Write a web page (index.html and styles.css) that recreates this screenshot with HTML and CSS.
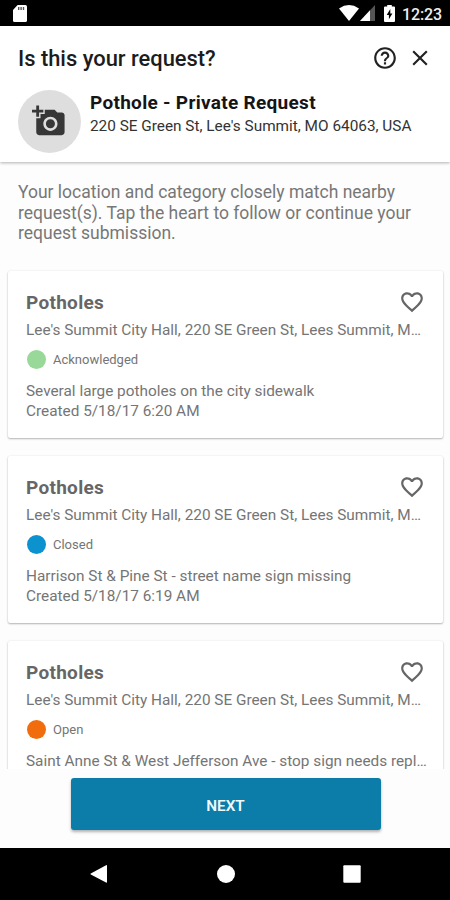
FILE: index.html
```html
<!DOCTYPE html>
<html lang="en">
<head>
<meta charset="utf-8">
<title>Is this your request?</title>
<link rel="stylesheet" href="styles.css">
</head>
<body>
<svg class="defs" width="0" height="0" aria-hidden="true">
  <symbol id="heart" viewBox="0 0 24 24"><path d="M16.5 3c-1.74 0-3.41.81-4.5 2.09C10.91 3.81 9.24 3 7.5 3 4.42 3 2 5.42 2 8.5c0 3.78 3.4 6.86 8.55 11.54L12 21.35l1.45-1.32C18.6 15.36 22 12.28 22 8.5 22 5.42 19.58 3 16.5 3zm-4.4 15.55l-.1.1-.1-.1C7.14 14.24 4 11.39 4 8.5 4 6.5 5.5 5 7.5 5c1.54 0 3.04.99 3.57 2.36h1.87C13.46 5.99 14.96 5 16.5 5c2 0 3.5 1.5 3.5 3.5 0 2.89-3.14 5.74-7.9 10.05z"/></symbol>
</svg>
<div class="screen">
  <div class="status-bar">
    <svg class="sd" viewBox="0 0 14 17"><path fill="#fff" d="M4.6 0H12.4Q14 0 14 1.6V15.4Q14 17 12.4 17H1.6Q0 17 0 15.4V5z"/><path fill="#555" d="M5 2h1.4v3H5zM7.4 2h1.4v3H7.4zM9.8 2h1.4v3H9.8z"/></svg>
    <div class="status-icons">
      <svg class="wifi" viewBox="0 0 20 16"><path fill="#fff" d="M0 3.4Q10-3.2 20 3.4L10 16z"/></svg>
      <svg class="signal" viewBox="0 0 15 16"><path fill="#555" d="M15 0V16H0z"/><path fill="#fff" d="M10 5.3V16H0z"/></svg>
      <svg class="battery" viewBox="0 0 11 17"><path fill="#fff" d="M3.2 0h4.6v1.6H10q1 0 1 1V16q0 1-1 1H1q-1 0-1-1V2.600q0-1 1-1h2.200z"/><path fill="#000" d="M6.300 4L2.700 10h2.200v4.200L8.400 8.400H6.300z"/></svg>
      <span class="clock">12:23</span>
    </div>
  </div>
  <header class="header">
    <div class="title-row">
      <h1 class="title">Is this your request?</h1>
      <svg class="icon" viewBox="0 0 24 24"><path d="M11 18h2v-2h-2v2zm1-16C6.480 2 2 6.480 2 12s4.480 10 10 10 10-4.480 10-10S17.520 2 12 2zm0 18c-4.410 0-8-3.590-8-8s3.590-8 8-8 8 3.590 8 8-3.590 8-8 8zm0-14c-2.210 0-4 1.790-4 4h2c0-1.100.9-2 2-2s2 .9 2 2c0 2-3 1.750-3 5h2c0-2.250 3-2.500 3-5 0-2.210-1.790-4-4-4z"/></svg>
      <svg class="icon close" viewBox="0 0 24 24"><path d="M19 6.410L17.590 5 12 10.590 6.410 5 5 6.410 10.590 12 5 17.590 6.410 19 12 13.410 17.590 19 19 17.590 13.410 12z"/></svg>
    </div>
    <div class="request">
      <div class="avatar">
        <svg class="camera" viewBox="0 0 24 24"><path d="M3 4V1h2v3h3v2H5v3H3V6H0V4h3zm3 6V7h3V4h7l1.830 2H21c1.100 0 2 .9 2 2v12c0 1.100-.9 2-2 2H5c-1.100 0-2-.9-2-2V10h3zm7 9c2.760 0 5-2.240 5-5s-2.240-5-5-5-5 2.240-5 5 2.240 5 5 5zm-3.200-5c0 1.770 1.430 3.200 3.200 3.200s3.200-1.430 3.200-3.200-1.430-3.200-3.200-3.200-3.200 1.430-3.200 3.200z"/></svg>
      </div>
      <div class="request-text">
        <div class="request-name">Pothole - Private Request</div>
        <div class="request-address">220 SE Green St, Lee's Summit, MO 64063, USA</div>
      </div>
    </div>
  </header>
  <main class="content">
    <p class="intro">Your location and category closely match nearby<br>request(s). Tap the heart to follow or continue your<br>request submission.</p>
    <article class="card">
      <div class="card-head"><h2 class="card-title">Potholes</h2><svg class="heart"><use href="#heart"/></svg></div>
      <div class="line address">Lee's Summit City Hall, 220 SE Green St, Lees Summit, M…</div>
      <div class="state"><span class="dot acknowledged"></span><span class="state-name">Acknowledged</span></div>
      <div class="line">Several large potholes on the city sidewalk</div>
      <div class="line">Created 5/18/17 6:20 AM</div>
    </article>
    <article class="card">
      <div class="card-head"><h2 class="card-title">Potholes</h2><svg class="heart"><use href="#heart"/></svg></div>
      <div class="line address">Lee's Summit City Hall, 220 SE Green St, Lees Summit, M…</div>
      <div class="state"><span class="dot closed"></span><span class="state-name">Closed</span></div>
      <div class="line">Harrison St &amp; Pine St - street name sign missing</div>
      <div class="line">Created 5/18/17 6:19 AM</div>
    </article>
    <article class="card">
      <div class="card-head"><h2 class="card-title">Potholes</h2><svg class="heart"><use href="#heart"/></svg></div>
      <div class="line address">Lee's Summit City Hall, 220 SE Green St, Lees Summit, M…</div>
      <div class="state"><span class="dot open"></span><span class="state-name">Open</span></div>
      <div class="line">Saint Anne St &amp; West Jefferson Ave - stop sign needs repl…</div>
    </article>
  </main>
  <footer class="footer"><button class="next">NEXT</button></footer>
  <nav class="nav-bar">
    <svg class="nav-icon" viewBox="0 0 18 18"><path d="M16.500 0Q17 0 17 1V17Q17 18 16 17.600L.8 9.600Q0 9 .8 8.400z"/></svg>
    <svg class="nav-icon" viewBox="0 0 18 18"><circle cx="9" cy="9" r="9"/></svg>
    <svg class="nav-icon" viewBox="0 0 18 18"><rect x=".3" y=".3" width="17.400" height="17.400" rx="1"/></svg>
  </nav>
</div>
</body>
</html>
```
FILE: styles.css
```css
* { box-sizing: border-box; }
body { margin: 0; font-family: Roboto, "Liberation Sans", sans-serif; background: #fff; }
h1, h2, p { margin: 0; }
svg { display: block; flex: none; }
.defs { display: none; }
.screen { width: 450px; height: 900px; display: flex; flex-direction: column; overflow: hidden; background: #fdfdfd; }

.status-bar { height: 26px; flex: none; background: #000; display: flex; justify-content: space-between; padding: 5px 8px 0 13px; }
.sd { width: 14px; height: 17px; }
.status-icons { display: flex; align-items: flex-start; }
.wifi { width: 20px; height: 16px; margin-right: 1px; }
.signal { width: 15px; height: 16px; margin-right: 9px; }
.battery { width: 11px; height: 17px; margin-right: 7px; }
.clock { color: #eee; font-size: 16px; line-height: 19px; font-weight: 500; width: 40px; white-space: nowrap; letter-spacing: -0.1px; }

.header { height: 136px; flex: none; background: #fff; padding: 18px 17px 0 18px; box-shadow: 0 1px 3px rgba(0, 0, 0, .3); position: relative; }
.title-row { display: flex; align-items: center; height: 27px; }
.title { flex: 1; font-size: 21.900px; line-height: 27px; padding-top: 1px; font-weight: 500; color: #1c1c1c; white-space: nowrap; }
.icon { width: 26px; height: 26px; fill: #222; }
.close { margin-left: 9px; }
.request { display: flex; margin-top: 19px; }
.avatar { width: 63px; height: 63px; border-radius: 50%; background: #dedede; padding: 14px; flex: none; }
.camera { width: 34px; height: 34px; fill: #373737; }
.request-text { padding: 1px 0 0 9px; white-space: nowrap; }
.request-name { font-size: 19px; letter-spacing: .3px; line-height: 24px; font-weight: 700; color: #151515; }
.request-address { font-size: 15.350px; line-height: 22px; color: #333; }

.content { flex: 1; min-height: 0; overflow: hidden; padding: 20px 7px 0 8px; }
.intro { padding-left: 10px; font-size: 17.500px; line-height: 20.700px; color: #777; white-space: nowrap; height: 89px; }
.card { height: 167px; margin-bottom: 18px; background: #fff; border-radius: 2px; padding: 17px 18px 0; box-shadow: 0 1px 2px rgba(0, 0, 0, .28), 0 0 2px rgba(0, 0, 0, .08); color: #757575; }
.card-head { display: flex; justify-content: space-between; align-items: center; height: 28px; }
.card-title { font-size: 19px; letter-spacing: .3px; line-height: 28px; padding-top: 1px; font-weight: 700; color: #666; }
.heart { width: 26px; height: 26px; fill: #666; }
.line { font-size: 15.350px; line-height: 20.500px; white-space: nowrap; }
.address { margin-top: 4px; }
.state { display: flex; align-items: center; height: 20px; margin: 9px 0 11px 1px; }
.dot { width: 19px; height: 19px; border-radius: 50%; }
.acknowledged { background: #98d898; }
.closed { background: #0c93cf; }
.open { background: #f06c0c; }
.state-name { margin-left: 7px; font-size: 13px; line-height: 20px; }

.footer { height: 79px; flex: none; display: flex; justify-content: center; padding: 9px 0 0 1px; background: #fdfdfd; }
.next { width: 310px; height: 52px; border: 0; border-radius: 3px; background: #0c7ca8; color: #eef9fd; font: 600 15.300px/54px Roboto, sans-serif; padding: 1px 0 0; box-shadow: 0 2px 3px rgba(0, 0, 0, .3); }
.nav-bar { height: 52px; flex: none; background: #000; display: flex; justify-content: space-between; align-items: center; padding: 0 89px 0 90px; }
.nav-icon { width: 18px; height: 18px; fill: #fff; }
```
